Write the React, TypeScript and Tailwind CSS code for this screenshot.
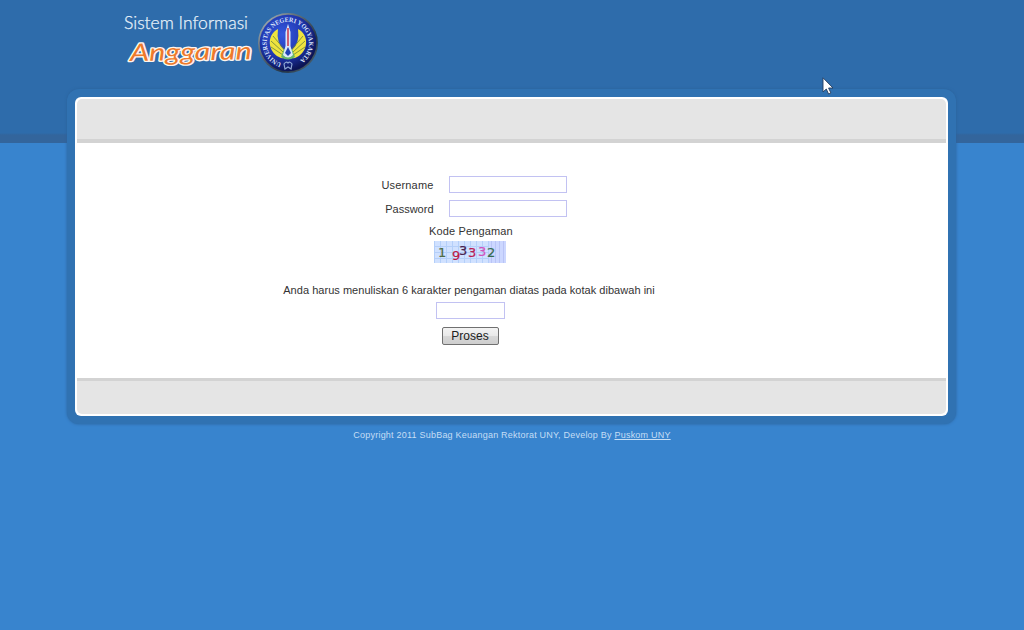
import React from "react";

const captcha = [
  { char: "1", x: 4, y: 16, color: "#4d6b45" },
  { char: "9", x: 18, y: 19, color: "#bd1746" },
  { char: "3", x: 25, y: 14, color: "#4a2350" },
  { char: "3", x: 34, y: 16, color: "#b91d56" },
  { char: "3", x: 44, y: 15, color: "#d052bd" },
  { char: "2", x: 53, y: 16, color: "#356c50" },
];

function Wordmark() {
  return (
    <svg width="136" height="70" viewBox="0 0 136 70" role="img" aria-label="Sistem Informasi Anggaran">
      <text x="4" y="23" fontFamily="Lato, sans-serif" fontSize="17.5" fontWeight="300" fill="#e9f2fa" stroke="#e9f2fa" strokeWidth="0.25" textLength="124" lengthAdjust="spacing">
        Sistem Informasi
      </text>
      <text x="10" y="55" transform="rotate(-0.8 10 55)" fontFamily="Lato, sans-serif" fontSize="24" fontStyle="italic" fontWeight="400" fill="#ee7a2b" stroke="#fff6ee" strokeWidth="2.6" strokeLinejoin="round" paintOrder="stroke" textLength="122" lengthAdjust="spacingAndGlyphs">
        Anggaran
      </text>
    </svg>
  );
}

function Seal() {
  return (
    <svg width="64" height="64" viewBox="0 0 64 64" role="img" aria-label="Universitas Negeri Yogyakarta">
      <defs>
        <linearGradient id="rim" x1="0" y1="0" x2="1" y2="1">
          <stop offset="0" stopColor="#c3cbd0" />
          <stop offset="0.3" stopColor="#68767e" />
          <stop offset="0.7" stopColor="#223447" />
          <stop offset="1" stopColor="#667c83" />
        </linearGradient>
        <radialGradient id="disc" cx="0.4" cy="0.35" r="0.65">
          <stop offset="0" stopColor="#3559df" />
          <stop offset="0.6" stopColor="#2037b0" />
          <stop offset="1" stopColor="#0b1455" />
        </radialGradient>
        <path id="ring" d="M25.5 52A21 21 0 1 1 39.5 51.5" />
      </defs>
      <circle cx="32" cy="32" r="30" fill="url(#rim)" />
      <circle cx="32" cy="32" r="28.3" fill="url(#disc)" />
      <text fontFamily="Liberation Serif, serif" fontSize="6.6" fontWeight="700" fill="#dbe5fa">
        <textPath href="#ring" textLength="112" lengthAdjust="spacingAndGlyphs">UNIVERSITAS NEGERI YOGYAKARTA</textPath>
      </text>
      <g fill="#eee33e">
        <path d="M22 18C10 24 12 41 23 46Q28 49 30 45L28 39Q20 32 22 18Z" />
        <path d="M42 18C54 24 52 41 41 46Q36 49 34 45L36 39Q44 32 42 18Z" />
      </g>
      <path d="M17 25L28 38M15 30L27 41M15 36L27 44M47 25L36 38M49 30L37 41M49 36L37 44" stroke="#68823c" strokeWidth="0.8" fill="none" />
      <path d="M28 38L25 46Q32 51 39 46L36 38Z" fill="#65b56a" />
      <path d="M32 13L29.5 21V35L27 44Q32 49 37 44L34.5 35V21Z" fill="#dce9fa" />
      <path d="M32 17V35" stroke="#ce5266" strokeWidth="1.8" />
      <path d="M32 36L29 42L32 45L35 42Z" fill="#2142b5" />
      <path d="M28 53Q30 50 32 52Q34 50 36 53L35 58L32 56L29 58Z" fill="none" stroke="#8fa7d4" strokeWidth="1.2" />
    </svg>
  );
}

function Captcha() {
  return (
    <svg width="72" height="22" viewBox="0 0 72 22" role="img" aria-label="Kode pengaman" className="block">
      <defs>
        <pattern id="grid" width="6" height="6" patternUnits="userSpaceOnUse">
          <rect width="6" height="6" fill="#d0e1ff" />
          <path d="M.5 0V6M0 5.5H6" stroke="#b4cff9" strokeWidth="1" />
        </pattern>
      </defs>
      <rect width="72" height="22" fill="url(#grid)" />
      <rect x="55" width="17" height="22" fill="#ccd7ff" />
      <path d="M57.5 0V22M61.5 0V22M65.5 0V22M69.5 0V22" stroke="#b9c4f6" />
      <g fontFamily="DejaVu Sans, sans-serif" fontSize="13">
        {captcha.map((c) => (
          <text key={c.x} x={c.x} y={c.y} fill={c.color} stroke={c.color} strokeWidth="0.2">{c.char}</text>
        ))}
      </g>
    </svg>
  );
}

const field = "h-[17px] rounded-none border border-[#c2c2f2] bg-white px-1 text-[11px] outline-none";

export default function App() {
  return (
    <div className="relative h-[630px] w-[1024px] overflow-hidden bg-[#3884ce] bg-[linear-gradient(to_bottom,#2e6cab_0,#2e6cab_133px,#33659c_135px,#33659c_143px,#3884ce_143px)] font-['Liberation_Sans',Arial,sans-serif] text-[11px] text-[#333]">
      <header className="flex h-[89px] pt-[6px] pl-[120px]">
        <Wordmark />
        <div className="pt-[5px]"><Seal /></div>
      </header>

      <main className="ml-[67px] w-[889px] rounded-[12px] bg-[#3072b2] p-2 shadow-[0_0_3px_#2b629a]">
        <div className="flex h-[319px] w-[873px] flex-col rounded-[6px] bg-white p-[2px]">
          <div className="h-[44px] shrink-0 rounded-t-[5px] border-b-4 border-[#d3d3d3] bg-[#e5e5e5]" />
          <form className="flex h-[235px] w-[786px] flex-col items-center pt-[33px]" onSubmit={(e) => e.preventDefault()}>
            <label className="flex h-[17px] w-[193px] items-center justify-end gap-[15px]">
              <span className="pt-[2px] tracking-[0.16px]">Username</span>
              <input className={`${field} w-[118px]`} />
            </label>
            <label className="mt-[7px] flex h-[17px] w-[193px] items-center justify-end gap-[15px]">
              <span className="pt-[2px]">Password</span>
              <input type="password" className={`${field} w-[118px]`} />
            </label>
            <p className="mt-[6px] h-[18px] pl-[2px] leading-[16px] tracking-[0.14px]">Kode Pengaman</p>
            <Captcha />
            <p className="mt-[19px] pr-[2px] leading-[16px] tracking-[0.03px]">Anda harus menuliskan 6 karakter pengaman diatas pada kotak dibawah ini</p>
            <input aria-label="Kode pengaman" className={`${field} mt-[4px] w-[69px]`} />
            <button className="mt-[8px] h-[18px] w-[57px] rounded-[2px] border border-[#707070] bg-[linear-gradient(#f3f3f3_0%,#e9e9e9_48%,#d8d8d8_50%,#cecece_100%)] text-[12px] leading-[16px] text-[#202020]">Proses</button>
          </form>
          <div className="h-[36px] shrink-0 rounded-b-[5px] border-t-[3px] border-[#d3d3d3] bg-[#e5e5e5]" />
        </div>
      </main>

      <footer className="mt-[5px] text-center text-[9px] leading-[12px] tracking-[0.22px] text-[#c5def5]">
        Copyright 2011 SubBag Keuangan Rektorat UNY, Develop By <a href="#" className="underline">Puskom UNY</a>
      </footer>

      <svg className="absolute top-[77px] left-[822px]" width="13" height="19" viewBox="0 0 13 19" aria-hidden="true">
        <path d="M1 .8V15L4.3 12L6.6 17L8.9 16L6.6 11H11Z" fill="#fff" stroke="#263d5e" strokeWidth="0.9" />
      </svg>
    </div>
  );
}
